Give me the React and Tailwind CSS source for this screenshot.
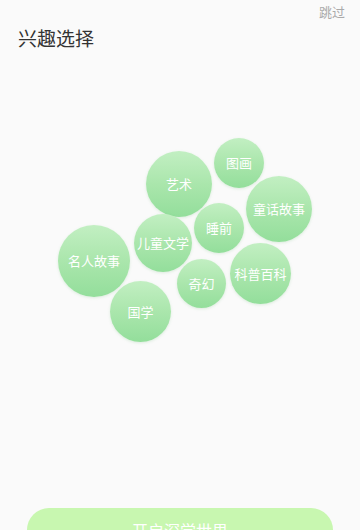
import React from "react";

const bubbles = [
  { label: "艺术", x: 146, y: 151, d: 66 },
  { label: "图画", x: 214, y: 138, d: 50 },
  { label: "童话故事", x: 246, y: 176, d: 66 },
  { label: "睡前", x: 194, y: 203, d: 50 },
  { label: "儿童文学", x: 134, y: 214, d: 58 },
  { label: "名人故事", x: 58, y: 225, d: 72 },
  { label: "科普百科", x: 230, y: 243, d: 61 },
  { label: "奇幻", x: 177, y: 259, d: 49 },
  { label: "国学", x: 110, y: 281, d: 61 },
];

function Bubble({ label, x, y, d }) {
  return (
    <div
      className="absolute flex items-center justify-center rounded-full bg-gradient-to-b from-[#c2efc2] via-[#aae6ac] to-[#93de9b] shadow-[0_1px_3px_rgba(100,180,110,0.2)]"
      style={{ left: x, top: y, width: d, height: d }}
    >
      <span className="text-[13px] text-white">{label}</span>
    </div>
  );
}

export default function App() {
  return (
    <div
      className="flex h-[530px] w-[360px] flex-col overflow-hidden bg-[#fafafa]"
      style={{ fontFamily: '"Noto Sans CJK SC", "Noto Sans", sans-serif' }}
    >
      <div className="flex justify-end pr-[15px] pt-[3px]">
        <span className="text-[13px] leading-[18px] text-[#aaaaaa]">跳过</span>
      </div>
      <h1 className="pl-[18px] pt-[4px] text-[19px] leading-[26px] text-[#333333]">
        兴趣选择
      </h1>
      <div className="relative flex-1">
        <div className="absolute left-0 top-[-51px] h-[400px] w-[360px]">
          {bubbles.map((b) => (
            <Bubble key={b.label} {...b} />
          ))}
        </div>
      </div>
      <div className="px-[27px]">
        <button className="mb-[-22px] flex h-[44px] w-full items-center justify-center rounded-full bg-[#c8f7b0] text-[16px] text-white">
          开启深学世界
        </button>
      </div>
    </div>
  );
}
